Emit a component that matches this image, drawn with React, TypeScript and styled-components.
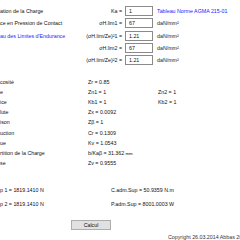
import React from 'react';
import styled, { createGlobalStyle } from 'styled-components';

// Styles globaux : page blanche, petite police type formulaire Windows
const GlobalStyle = createGlobalStyle`
    html, body {
        margin: 0;
        padding: 0;
        background: #fff;
    }
    body {
        font-family: "Liberation Sans", Arial, sans-serif;
        font-size: 5.3px;
        color: #111;
    }
`;

const Page = styled.div`
    width: 240px;
    height: 240px;
    overflow: hidden;
    display: flex;
    flex-direction: column;
    white-space: nowrap;
`;

// Bloc des saisies
const InputGrid = styled.div`
    display: grid;
    grid-template-columns: 82px 43px 32px 1fr;
    grid-auto-rows: 12.25px;
    align-items: center;
    margin-top: 5px;
`;

const Label = styled.span`
    overflow: hidden;
`;

const LinkText = styled.span`
    color: #1a1aff;
    text-decoration: underline;
    overflow: hidden;
`;

const EqLabel = styled.span`
    text-align: right;
    padding-right: 3px;
`;

const Field = styled.input`
    box-sizing: border-box;
    width: 28px;
    height: 10px;
    border: 1px solid #8a8a8a;
    background: #fff;
    padding: 0 3px;
    margin: 0;
    font-family: inherit;
    font-size: 5.3px;
    color: #111;
    outline: none;
`;

const Unit = styled.span`
    color: #222;
`;

// Bloc des résultats
const ResultGrid = styled.div`
    display: grid;
    grid-template-columns: 88px 70px 1fr;
    grid-auto-rows: 10.1px;
    align-items: center;
    margin-top: 10.75px;
`;

const Value = styled.span<{ $span?: boolean }>`
    grid-column: ${(p) => (p.$span ? 'span 2' : 'auto')};
`;

const Small = styled.span`
    font-size: 4.4px;
`;

const TotalGrid = styled.div`
    display: grid;
    grid-template-columns: 111px 1fr;
    grid-auto-rows: 14px;
    align-items: center;
    margin-top: 15px;
`;

const Button = styled.button`
    box-sizing: border-box;
    width: 40px;
    height: 10px;
    margin: 9px 0 0 71px;
    padding: 0;
    background: #e1e1e1;
    border: 1px solid #adadad;
    font-family: inherit;
    font-size: 5.3px;
    color: #111;
    line-height: 8px;
`;

const Copyright = styled.div`
    margin: 4px 0 0 168px;
    font-size: 5.3px;
    color: #333;
`;

const inputs = [
    { label: 'ation de la Charge', eq: 'Ka =', value: '1', link: true },
    { label: 'ce en Pression de Contact', eq: 'σH.lim1 =', value: '67' },
    { label: "au des Limites d'Endurance", isLink: true, eq: '(σH.lim/Ze)²1 =', value: '1.21' },
    { label: '', eq: 'σH.lim2 =', value: '67' },
    { label: '', eq: '(σH.lim/Ze)²2 =', value: '1.21' },
];

const results: [string, string, string?][] = [
    ['cosité', 'Zr  =  0.85'],
    ['e', 'Zn1  =  1', 'Zn2  =  1'],
    ['ice', 'Kb1  =  1', 'Kb2  =  1'],
    ['lute', 'Zx  =  0.0092'],
    ['ison', 'Zβ  =  1'],
    ['uction', 'Cr  =  0.1309'],
    ['ue', 'Kv  =  1.0543'],
    ['rtition de la Charge', 'b/Kaβ  =  31.362'],
    ['se', 'Zv  =  0.9555'],
];

const App = () => {
    return (
        <Page>
            <GlobalStyle />
            <InputGrid>
                {inputs.map((r, i) => (
                    <React.Fragment key={i}>
                        {r.isLink ? <LinkText>{r.label}</LinkText> : <Label>{r.label}</Label>}
                        <EqLabel>{r.eq}</EqLabel>
                        <Field defaultValue={r.value} />
                        {r.link ? (
                            <LinkText>Tableau Norme AGMA 215-01</LinkText>
                        ) : (
                            <Unit>daN/mm²</Unit>
                        )}
                    </React.Fragment>
                ))}
            </InputGrid>

            <ResultGrid>
                {results.map(([label, a, b], i) => (
                    <React.Fragment key={i}>
                        <Label>{label}</Label>
                        <Value $span={!b}>
                            {a}
                            {label.startsWith('rtition') && <Small> mm</Small>}
                        </Value>
                        {b && <Value>{b}</Value>}
                    </React.Fragment>
                ))}
            </ResultGrid>

            <TotalGrid>
                <Label>p 1  =  1819.1410 N</Label>
                <Value>C.adm.Sup  =  50.9359 N.m</Value>
                <Label>p 2  =  1819.1410 N</Label>
                <Value>P.adm.Sup  =  8001.0003 W</Value>
            </TotalGrid>

            <div>
                <Button>Calcul</Button>
            </div>

            <Copyright>Copyright 26.03.2014 Abbas 2017</Copyright>
        </Page>
    );
};

export default App;
